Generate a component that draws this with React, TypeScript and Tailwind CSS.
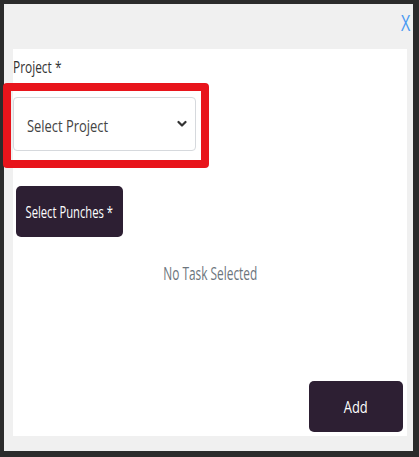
import { ReactNode } from 'react'

function Narrow({ children, className = '' }: { children: ReactNode; className?: string }) {
  return <span className={`inline-block whitespace-nowrap ${className}`}>{children}</span>
}

export default function App() {
  return (
    <div
      className="relative w-[419px] h-[457px] bg-[#2b2b2b] pt-[4px] pl-[4px] pr-[6px] pb-[6px]"
      style={{ fontFamily: '"Open Sans", sans-serif' }}
    >
      <div className="h-full bg-[#f0f0f0] pl-[9px] pr-[6px] pb-[15px] flex flex-col">
        {/* header */}
        <div className="h-[45px] flex justify-end items-start pt-[6px]">
          <Narrow className="scale-x-[0.76] origin-right text-[21px] leading-[26px] text-[#4a9af2] mr-[-3px]">X</Narrow>
        </div>

        {/* body */}
        <div className="flex-1 bg-white flex flex-col">
          <label className="mt-[7px] text-[17px] leading-[22px] text-[#333]">
            <Narrow className="scale-x-[0.7] origin-left">Project *</Narrow>
          </label>
          <div className="mt-[19px] w-[183px] h-[54px] border border-[#d6d9dd] rounded-[4px] flex items-center justify-between pl-[13px] pr-[8px]">
            <Narrow className="scale-x-[0.76] origin-left text-[17px] text-[#444] mt-[3px]">Select Project</Narrow>
            <svg width="10" height="8" viewBox="0 0 10 8" fill="none">
              <path d="M1.5 2 L5 5.5 L8.5 2" stroke="#333" strokeWidth="2.2" strokeLinecap="round" strokeLinejoin="round" />
            </svg>
          </div>

          <button className="mt-[35px] ml-[3px] w-[107px] h-[51px] bg-[#2d1f33] rounded-[5px] text-white text-[17px] flex items-center justify-center">
            <Narrow className="scale-x-[0.66] origin-center">Select Punches *</Narrow>
          </button>

          <p className="mt-[23px] text-center text-[18px] text-[#6c757d]">
            <Narrow className="scale-x-[0.66] origin-center">No Task Selected</Narrow>
          </p>

          <div className="flex-1" />
          <div className="flex justify-end pr-[4px] pb-[4px]">
            <button className="w-[94px] h-[51px] bg-[#2d1f33] rounded-[5px] text-white text-[17px] flex items-center justify-center">
              <Narrow className="scale-x-[0.76] origin-center">Add</Narrow>
            </button>
          </div>
        </div>
      </div>

      {/* red highlight annotation */}
      <div className="absolute left-[3px] top-[83px] w-[206px] h-[85px] border-[8px] border-[#e8141b] rounded-[4px]" />
    </div>
  )
}
